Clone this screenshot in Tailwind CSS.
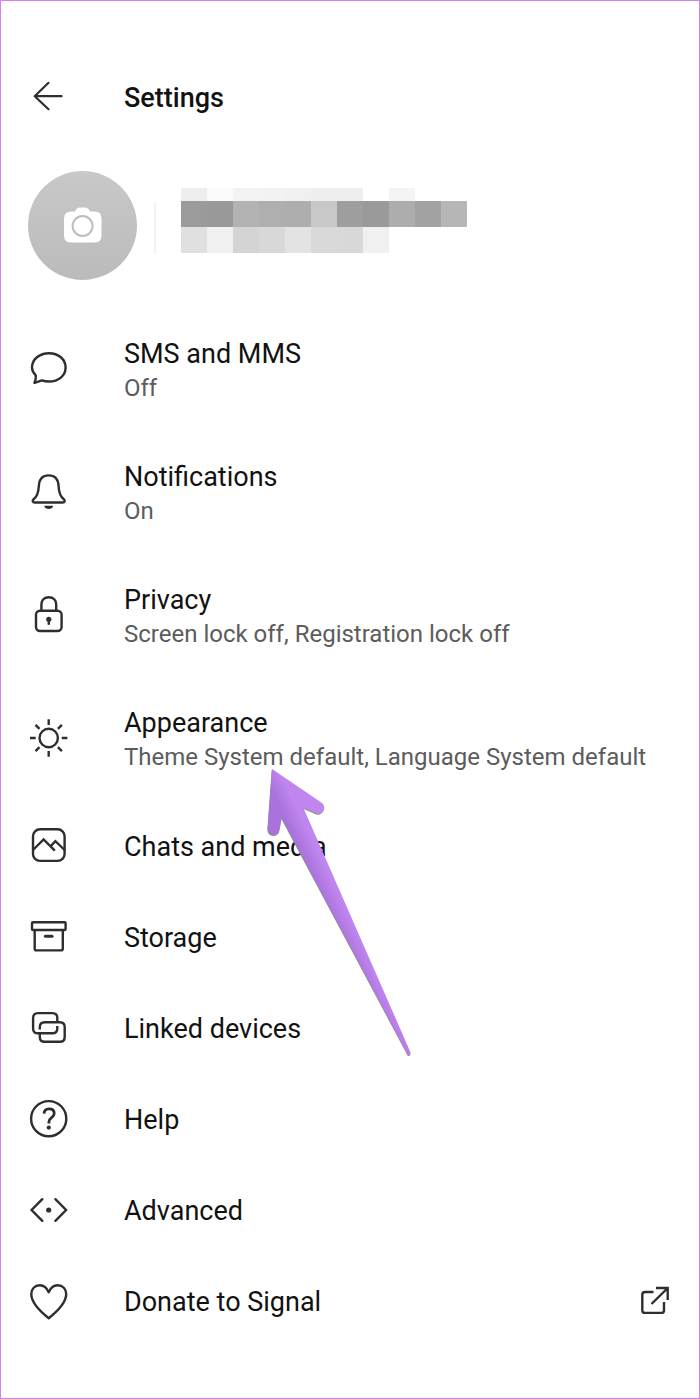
<!DOCTYPE html>
<html lang="en">
<head>
    <meta charset="UTF-8">
    <meta name="viewport" content="width=device-width, initial-scale=1.0">
    <title>Settings</title>
    <script src="https://cdn.jsdelivr.net/npm/@tailwindcss/browser@4"></script>
</head>
<body class="bg-white">
    <div class="relative min-h-screen border border-[#cf83ef] pt-[59px] font-['Roboto',sans-serif] text-[#121212]">
        <header class="flex h-[73px] items-center gap-[51px] pl-[23px]">
            <button type="button" aria-label="Back">
                <svg class="block size-[49px]" viewBox="0 0 49 49" fill="none" stroke="#2e2e2e" stroke-width="2.2" stroke-linecap="round" stroke-linejoin="round"><path d="M24.5 10.8 10.7 24.2 24.5 37.3M10.7 24.2H37.5"/></svg>
            </button>
            <h1 class="pt-0.5 text-[27px] leading-[34px] font-medium">Settings</h1>
        </header>

        <!-- profile -->
        <section class="flex h-[174px] items-start pt-[38px] pl-[27px]">
            <button type="button" aria-label="Edit photo" class="flex size-[109px] items-center justify-center rounded-full bg-linear-to-b from-[#c8c8c8] to-[#bbbbbb]">
                <svg class="block h-[37px] w-[39px]" viewBox="0 0 39 37">
                    <path fill="#fff" d="M12 4.500 13.500 2Q14.600 .4 16.500 .4H22.500Q24.400 .4 25.500 2L27 4.500H31.500Q38.500 4.500 38.500 11.500V28.500Q38.500 35.500 31.500 35.500H8Q1 35.500 1 28.500V11.500Q1 4.500 8 4.500Z"/>
                    <circle cx="19.600" cy="19" r="10" fill="none" stroke="#bdbdbd" stroke-width="2"/>
                </svg>
            </button>
            <div class="mt-8 ml-[17px] h-[50px] w-0.5 bg-[#f1f1f1]"></div>
            <div class="mt-[17px] ml-[25px] flex flex-col">
                <div class="flex h-[13px]">
                    <span class="w-[26px] bg-[#eeeeee]"></span><span class="w-[26px] bg-[#fafafa]"></span><span class="w-[26px] bg-[#f3f3f3]"></span><span class="w-[26px] bg-[#f2f2f2]"></span><span class="w-[26px] bg-[#f0f0f0]"></span><span class="w-[26px] bg-[#eeeeee]"></span><span class="w-[26px] bg-[#eeeeee]"></span><span class="w-[26px]"></span><span class="w-[26px] bg-[#f4f4f4]"></span>
                </div>
                <div class="flex h-[26px]">
                    <span class="w-[26px] bg-[#9b9b9b]"></span><span class="w-[26px] bg-[#999999]"></span><span class="w-[26px] bg-[#b3b3b3]"></span><span class="w-[26px] bg-[#afafaf]"></span><span class="w-[26px] bg-[#aeaeae]"></span><span class="w-[26px] bg-[#c8c8c8]"></span><span class="w-[26px] bg-[#9e9e9e]"></span><span class="w-[26px] bg-[#9a9a9a]"></span><span class="w-[26px] bg-[#adadad]"></span><span class="w-[26px] bg-[#a2a2a2]"></span><span class="w-[26px] bg-[#b6b6b6]"></span>
                </div>
                <div class="flex h-[26px]">
                    <span class="w-[26px] bg-[#e0e0e0]"></span><span class="w-[26px] bg-[#f0f0f0]"></span><span class="w-[26px] bg-[#d4d4d4]"></span><span class="w-[26px] bg-[#d8d8d8]"></span><span class="w-[26px] bg-[#e3e3e3]"></span><span class="w-[26px] bg-[#d9d9d9]"></span><span class="w-[26px] bg-[#d8d8d8]"></span><span class="w-[26px] bg-[#f0f0f0]"></span>
                </div>
            </div>
        </section>

        <nav class="flex flex-col text-[27px] leading-[34px]">
            <a href="#sms" class="flex h-[123px] items-center gap-[51px] pl-[23px]">
                <svg class="size-[49px] shrink-0" viewBox="0 0 49 49" fill="none" stroke="#2e2e2e" stroke-width="2.4" stroke-linecap="round" stroke-linejoin="round"><path d="M11.8 31.5C9.3 28.8 8 26 8 23.5 8 15.3 15.5 9.2 25 9.2S41.6 15.3 41.6 23.5 34.5 37.5 25 37.5C22.5 37.5 20 37.1 18 36.4L10.5 38.8C11.7 36.3 12.1 34 11.8 31.5Z"/></svg>
                <div class="pt-1">
                    <div>SMS and MMS</div>
                    <div class="text-[24px] text-[#5c5c5c]">Off</div>
                </div>
            </a>
            <a href="#notifications" class="flex h-[123px] items-center gap-[51px] pl-[23px]">
                <svg class="size-[49px] shrink-0" viewBox="0 0 49 49" fill="none" stroke="#2e2e2e" stroke-width="2.4" stroke-linejoin="round"><path d="M24.7 8.4C18.5 8.4 15.3 12.5 14.9 18.5 14.5 25.5 13.5 29.5 9.6 32.3 7.9 33.7 8.7 35.5 10.7 35.5H38.7C40.7 35.5 41.5 33.7 39.8 32.3 35.9 29.5 34.9 25.5 34.5 18.5 34.1 12.5 30.9 8.4 24.7 8.4Z"/><path fill="#2e2e2e" stroke="none" d="M20.2 38.8H29.2C28.6 43.2 20.8 43.2 20.2 38.8Z"/></svg>
                <div class="pt-1">
                    <div>Notifications</div>
                    <div class="text-[24px] text-[#5c5c5c]">On</div>
                </div>
            </a>
            <a href="#privacy" class="flex h-[123px] items-center gap-[51px] pl-[23px]">
                <svg class="size-[49px] shrink-0" viewBox="0 0 49 49" fill="none" stroke="#2e2e2e" stroke-width="2.4"><rect x="12" y="20.800" width="25.600" height="20.200" rx="4"/><path d="M17.4 20.8V14.5C17.4 10 20.5 7.2 24.8 7.2S32.2 10 32.2 14.5V20.8"/><circle cx="24.8" cy="29.3" r="2.6" fill="#2e2e2e" stroke="none"/><path d="M24.8 29V34.8"/></svg>
                <div class="pt-1">
                    <div>Privacy</div>
                    <div class="text-[24px] text-[#5c5c5c]">Screen lock off, Registration lock off</div>
                </div>
            </a>
            <a href="#appearance" class="flex h-[123px] items-center gap-[51px] pl-[23px]">
                <svg class="size-[49px] shrink-0" viewBox="0 0 49 49" fill="none" stroke="#2e2e2e" stroke-width="2.4"><circle cx="24.7" cy="25" r="9.2"/><path d="M24.7 6.3V12M24.7 38V43.7M6 25H11.7M37.7 25H43.4M11.5 11.8 15.5 15.8M33.9 34.2 37.9 38.2M11.5 38.2 15.5 34.2M33.9 15.8 37.9 11.8"/></svg>
                <div class="pt-1">
                    <div>Appearance</div>
                    <div class="text-[24px] text-[#5c5c5c]">Theme System default, Language System default</div>
                </div>
            </a>
            <a href="#chats" class="flex h-[91px] items-center gap-[51px] pl-[23px]">
                <svg class="size-[49px] shrink-0" viewBox="0 0 49 49" fill="none" stroke="#2e2e2e" stroke-width="2.4"><rect x="9" y="9.3" width="31.6" height="31.6" rx="7"/><path d="M9 30 19.6 19.4 30.8 30.6M26.5 26.3 31.4 21.2 40.6 30"/></svg>
                <div class="pt-1">Chats and media</div>
            </a>
            <a href="#storage" class="flex h-[91px] items-center gap-[51px] pl-[23px]">
                <svg class="size-[49px] shrink-0" viewBox="0 0 49 49" fill="none" stroke="#2e2e2e" stroke-width="2.4" stroke-linejoin="round"><rect x="8" y="11.3" width="33.6" height="7.7" rx="1"/><path d="M10.7 19V37.8Q10.7 39.4 12.3 39.4H37.2Q38.8 39.4 38.8 37.8V19"/><path stroke-width="3" stroke-linecap="round" d="M21.4 25.3H28"/></svg>
                <div class="pt-1">Storage</div>
            </a>
            <a href="#linked" class="flex h-[91px] items-center gap-[51px] pl-[23px]">
                <svg class="size-[49px] shrink-0" viewBox="0 0 49 49" fill="none" stroke="#2e2e2e" stroke-width="2.4"><path d="M33.3 24V26.5Q33.3 31.3 28.5 31.3H13.9Q9.1 31.3 9.1 26.5V15.9Q9.1 11.1 13.9 11.1H28.5Q33.3 11.1 33.3 15.9V20"/><path d="M15.8 27.5V25Q15.8 20.2 20.6 20.2H35.9Q40.7 20.2 40.7 25V35Q40.7 39.8 35.9 39.8H20.6Q15.8 39.8 15.8 35V31.3"/></svg>
                <div class="pt-1">Linked devices</div>
            </a>
            <a href="#help" class="flex h-[91px] items-center gap-[51px] pl-[23px]">
                <svg class="size-[49px] shrink-0" viewBox="0 0 49 49" fill="none" stroke="#2e2e2e" stroke-width="2.4"><circle cx="24.7" cy="25.7" r="17.6"/><path stroke-width="2.8" d="M20 20.6C20.2 17.6 22.2 15.9 25.1 15.9 28.2 15.9 30.2 17.7 30.2 20.4 30.2 22.3 29.2 23.5 27.6 24.7 25.7 26.1 24.9 27 24.9 29V30.5"/><circle cx="24.8" cy="34.6" r="2.1" fill="#2e2e2e" stroke="none"/></svg>
                <div class="pt-1">Help</div>
            </a>
            <a href="#advanced" class="flex h-[91px] items-center gap-[51px] pl-[23px]">
                <svg class="size-[49px] shrink-0" viewBox="0 0 49 49" fill="none" stroke="#2e2e2e" stroke-width="2.4" stroke-linecap="round"><path d="M18.3 15.2 7.6 26 18.3 36.8M31.4 15.2 42.1 26 31.4 36.8"/><circle cx="24.7" cy="26" r="2.6" fill="#2e2e2e" stroke="none"/></svg>
                <div class="pt-1">Advanced</div>
            </a>
            <a href="#donate" class="flex h-[91px] items-center gap-[51px] pr-[28px] pl-[23px]">
                <svg class="size-[49px] shrink-0" viewBox="0 0 49 49" fill="none" stroke="#2e2e2e" stroke-width="2.4" stroke-linejoin="round"><path d="M24.7 17.2C22.7 12.5 19.8 10.2 15.8 10.2 10.7 10.2 7.3 14 7.3 19 7.3 27.5 17.5 37.5 24.7 43.2 31.9 37.5 42.2 27.5 42.2 19 42.2 14 38.7 10.2 33.6 10.2 29.6 10.2 26.7 12.5 24.7 17.2Z"/></svg>
                <div class="pt-1">Donate to Signal</div>
                <svg class="ml-auto size-[31px] shrink-0" viewBox="0 0 31 31" fill="none" stroke="#2e2e2e" stroke-width="2.4"><path d="M13.5 8H5Q2.3 8 2.3 10.7V26.2Q2.3 28.9 5 28.9H21.3Q24 28.9 24 26.2V18M11.5 20 27.7 4M16 4H27.7V16"/></svg>
            </a>
        </nav>

        <!-- pointer over the appearance row -->
        <svg class="pointer-events-none absolute top-[759px] left-[259px] h-[300px] w-[155px]" viewBox="60 60 465 900">
            <defs>
                <linearGradient id="shaft" gradientUnits="userSpaceOnUse" x1="273" y1="524" x2="315" y2="504">
                    <stop offset="0" stop-color="#aa72dc"/>
                    <stop offset="1" stop-color="#c086f0"/>
                </linearGradient>
            </defs>
            <path fill="#8f8f8f" transform="translate(-1 3)" d="M96 87 243 187A17 17 0 0 1 226 219L190 203 512 938Q512 947 504 944L125 234 119 268A17 17 0 0 1 83 266Z"/>
            <path fill="url(#shaft)" d="M96 87 243 187A17 17 0 0 1 226 219L190 203 512 938Q512 947 504 944L125 234 119 268A17 17 0 0 1 83 266Z"/>
        </svg>
    </div>
</body>
</html>
